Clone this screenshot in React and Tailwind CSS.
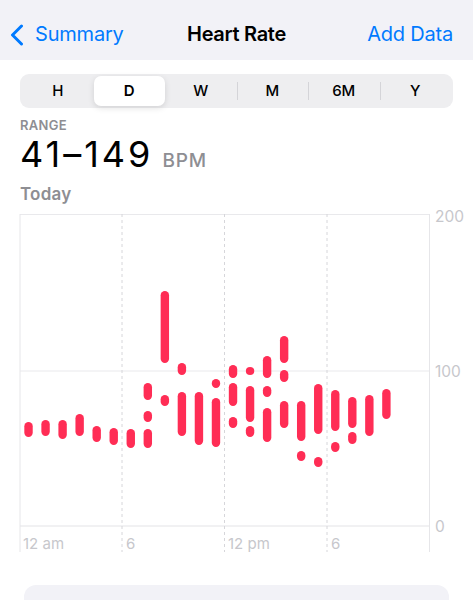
import React from 'react';

const SEGMENTS = ['H', 'D', 'W', 'M', '6M', 'Y'];

// page-y ranges [top, bottom] per hour, as read off the chart
const HOURS = [
  [[422, 437]],
  [[420, 436]],
  [[420, 439]],
  [[414, 436]],
  [[426, 442]],
  [[428, 445]],
  [[429, 448]],
  [[383, 400], [411, 422], [429, 448]],
  [[291, 363], [395, 406]],
  [[363, 375], [392, 436]],
  [[392, 445]],
  [[379, 388], [398, 447]],
  [[365, 378], [383, 406], [417, 428]],
  [[367, 375], [386, 422], [426, 437]],
  [[356, 378], [386, 397], [408, 442]],
  [[336, 363], [370, 382], [401, 428]],
  [[401, 441], [451, 461]],
  [[384, 434], [457, 467]],
  [[390, 431], [442, 452]],
  [[397, 428], [432, 444]],
  [[395, 436]],
  [[389, 419]],
];

const TOP = 205; // page y of the svg

function Chart() {
  const y = (v) => v - TOP;
  const gx = (h) => 20 + (409 / 24) * (h + 0.5);
  return (
    <svg width="473" height="350" viewBox="0 0 473 350" className="block">
      {/* horizontal grid */}
      <line x1="20" x2="429.5" y1={y(214.5)} y2={y(214.5)} stroke="#e9e9ec" strokeWidth="1" />
      <line x1="20" x2="429.5" y1={y(371)} y2={y(371)} stroke="#e9e9ec" strokeWidth="1" />
      <line x1="20" x2="429.5" y1={y(526)} y2={y(526)} stroke="#e3e3e6" strokeWidth="1" />
      {/* verticals */}
      <line x1="20" x2="20" y1={y(214)} y2={y(552)} stroke="#e6e6e9" strokeWidth="1" />
      <line x1="429.5" x2="429.5" y1={y(214)} y2={y(552)} stroke="#e6e6e9" strokeWidth="1" />
      {[122, 224.5, 327].map((x) => (
        <line key={x} x1={x} x2={x} y1={y(214)} y2={y(552)} stroke="#d6d6da" strokeWidth="1" strokeDasharray="3 3" />
      ))}
      {/* bars */}
      {HOURS.map((segs, h) =>
        segs.map(([t, b], i) => (
          <rect key={h + '-' + i} x={gx(h) - 4.2} y={y(t)} width="8.4" height={b - t} rx="4.2" fill="#ff2d55" />
        ))
      )}
      {/* y labels */}
      <g fill="#c7c7cc" fontSize="15.5" fontFamily="Inter, 'Liberation Sans', sans-serif">
        <text x="435" y={y(221.5)}>200</text>
        <text x="435" y={y(377)}>100</text>
        <text x="435" y={y(532)}>0</text>
      </g>
      {/* x labels */}
      <g fill="#c7c7cc" fontSize="15" fontFamily="Inter, 'Liberation Sans', sans-serif">
        <text x="23" y={y(548.5)}>12 am</text>
        <text x="126" y={y(548.5)}>6</text>
        <text x="228" y={y(548.5)}>12 pm</text>
        <text x="331" y={y(548.5)}>6</text>
      </g>
    </svg>
  );
}

export default function App() {
  return (
    <div className="w-[473px] h-[600px] overflow-hidden bg-white font-['Inter','Liberation_Sans',sans-serif]">
      <div className="h-[60px] bg-[#f2f2f7] flex items-center pt-[8px] px-[10px] relative">
        <div className="flex items-center gap-[11px] text-[#007aff] text-[20px] tracking-[-0.2px]">
          <svg width="14" height="22" viewBox="0 0 14 22" className="mt-[1px]">
            <path d="M11.5 2 L2.5 11 L11.5 20" fill="none" stroke="#007aff" strokeWidth="3" strokeLinecap="round" strokeLinejoin="round" />
          </svg>
          <span>Summary</span>
        </div>
        <div className="absolute left-0 right-0 top-[8px] bottom-0 flex items-center justify-center text-[20px] font-semibold text-black tracking-[-0.3px] pointer-events-none">
          Heart Rate
        </div>
        <div className="ml-auto pr-[10px] text-[#007aff] text-[20px] tracking-[-0.2px]">Add Data</div>
      </div>

      <div className="mx-[20px] mt-[14px] h-[34px] rounded-[9px] bg-[#eeeef0] flex items-center p-[2px]">
        {SEGMENTS.map((s, i) => {
          const sel = s === 'D';
          const showSep = i > 0 && i !== 1 && i !== 2;
          return (
            <div key={s} className="flex-1 flex items-center h-full relative">
              {showSep && <div className="absolute left-0 w-px h-[18px] bg-[#d4d4d8]" />}
              <div
                className={
                  sel
                    ? 'flex-1 h-full flex items-center justify-center rounded-[7px] bg-white shadow-[0_2px_6px_rgba(0,0,0,0.12)] text-[15px] font-semibold text-black'
                    : 'flex-1 h-full flex items-center justify-center text-[15px] font-medium text-black'
                }
              >
                {s}
              </div>
            </div>
          );
        })}
      </div>

      <div className="h-[97px] px-[20px] pt-[9px]">
        <div className="text-[13px] font-semibold text-[#8e8e93] leading-[16px] tracking-[0.3px]">RANGE</div>
        <div className="flex items-baseline gap-[9px] leading-[40px] mt-[1px]">
          <span className="text-[36px] text-black tracking-[3px]">41–149</span>
          <span className="text-[19px] font-medium text-[#8e8e93] tracking-[0.8px]">BPM</span>
        </div>
        <div className="text-[17px] font-semibold text-[#8e8e93] leading-[22px] mt-[2px] tracking-[0.2px]">Today</div>
      </div>

      <Chart />

      <div className="mx-[24px] mt-[30px] h-[60px] rounded-[12px] bg-[#f2f2f7]" />
    </div>
  );
}
